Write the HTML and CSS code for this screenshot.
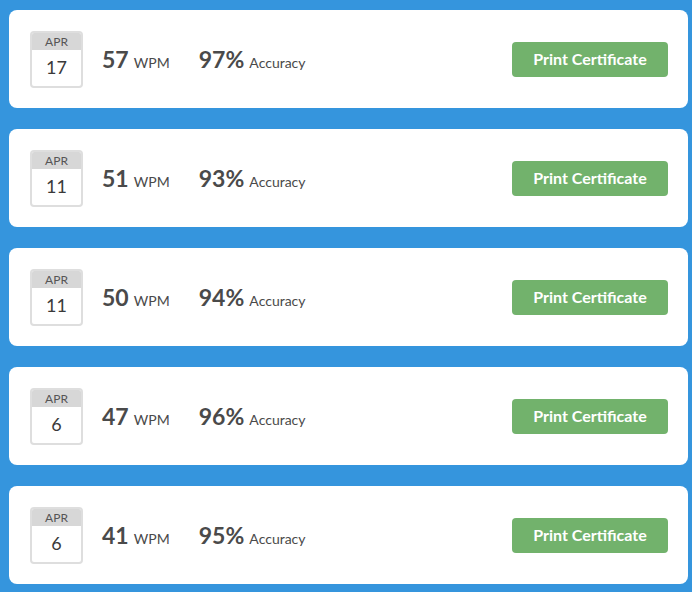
FILE: index.html
```html
<!DOCTYPE html>
<html>
<head>
<meta charset="utf-8">
<link rel="stylesheet" href="styles.css">
</head>
<body>
<div class="list">
  <div class="card">
    <div class="cal"><div class="cal-m">APR</div><div class="cal-d">17</div></div>
    <div class="stat"><span class="big">57</span> <span class="small">WPM</span></div>
    <div class="stat"><span class="big">97%</span> <span class="small">Accuracy</span></div>
    <button class="btn">Print Certificate</button>
  </div>
  <div class="card">
    <div class="cal"><div class="cal-m">APR</div><div class="cal-d">11</div></div>
    <div class="stat"><span class="big">51</span> <span class="small">WPM</span></div>
    <div class="stat"><span class="big">93%</span> <span class="small">Accuracy</span></div>
    <button class="btn">Print Certificate</button>
  </div>
  <div class="card">
    <div class="cal"><div class="cal-m">APR</div><div class="cal-d">11</div></div>
    <div class="stat"><span class="big">50</span> <span class="small">WPM</span></div>
    <div class="stat"><span class="big">94%</span> <span class="small">Accuracy</span></div>
    <button class="btn">Print Certificate</button>
  </div>
  <div class="card">
    <div class="cal"><div class="cal-m">APR</div><div class="cal-d">6</div></div>
    <div class="stat"><span class="big">47</span> <span class="small">WPM</span></div>
    <div class="stat"><span class="big">96%</span> <span class="small">Accuracy</span></div>
    <button class="btn">Print Certificate</button>
  </div>
  <div class="card">
    <div class="cal"><div class="cal-m">APR</div><div class="cal-d">6</div></div>
    <div class="stat"><span class="big">41</span> <span class="small">WPM</span></div>
    <div class="stat"><span class="big">95%</span> <span class="small">Accuracy</span></div>
    <button class="btn">Print Certificate</button>
  </div>
</div>
</body>
</html>
```
FILE: styles.css
```css
html, body {
  margin: 0;
  padding: 0;
  background: #3595dd;
}
body {
  font-family: Lato, "Open Sans", sans-serif;
  color: #4a4a4a;
}
.list {
  display: flex;
  flex-direction: column;
  gap: 21px;
  padding: 10px 0 0 9px;
  width: 679px;
}
.card {
  background: #fff;
  border-radius: 8px;
  height: 98px;
  box-sizing: border-box;
  padding: 0 20px 0 21px;
  display: flex;
  align-items: center;
}
.cal {
  width: 53px;
  height: 57px;
  box-sizing: border-box;
  border: 2px solid #dedede;
  border-radius: 4px;
  overflow: hidden;
  display: flex;
  flex-direction: column;
  margin-right: 19px;
}
.cal-m {
  background: #d7d7d7;
  height: 17px;
  font-size: 12px;
  line-height: 18px;
  text-align: center;
  color: #555;
}
.cal-d {
  flex: 1;
  display: flex;
  align-items: center;
  justify-content: center;
  font-size: 18px;
  color: #3a3a3a;
  padding-bottom: 2px;
}
.stat {
  margin-right: 29px;
  white-space: nowrap;
}
.big {
  font-size: 23px;
  font-weight: 700;
}
.small {
  font-size: 14px;
  margin-left: 1px;
}
.btn {
  margin-left: auto;
  width: 156px;
  height: 35px;
  border: none;
  border-radius: 4px;
  background: #72b26c;
  color: #fff;
  font-family: Lato, "Open Sans", sans-serif;
  font-weight: 700;
  font-size: 16px;
  padding: 0 0 2px 0;
}
```
